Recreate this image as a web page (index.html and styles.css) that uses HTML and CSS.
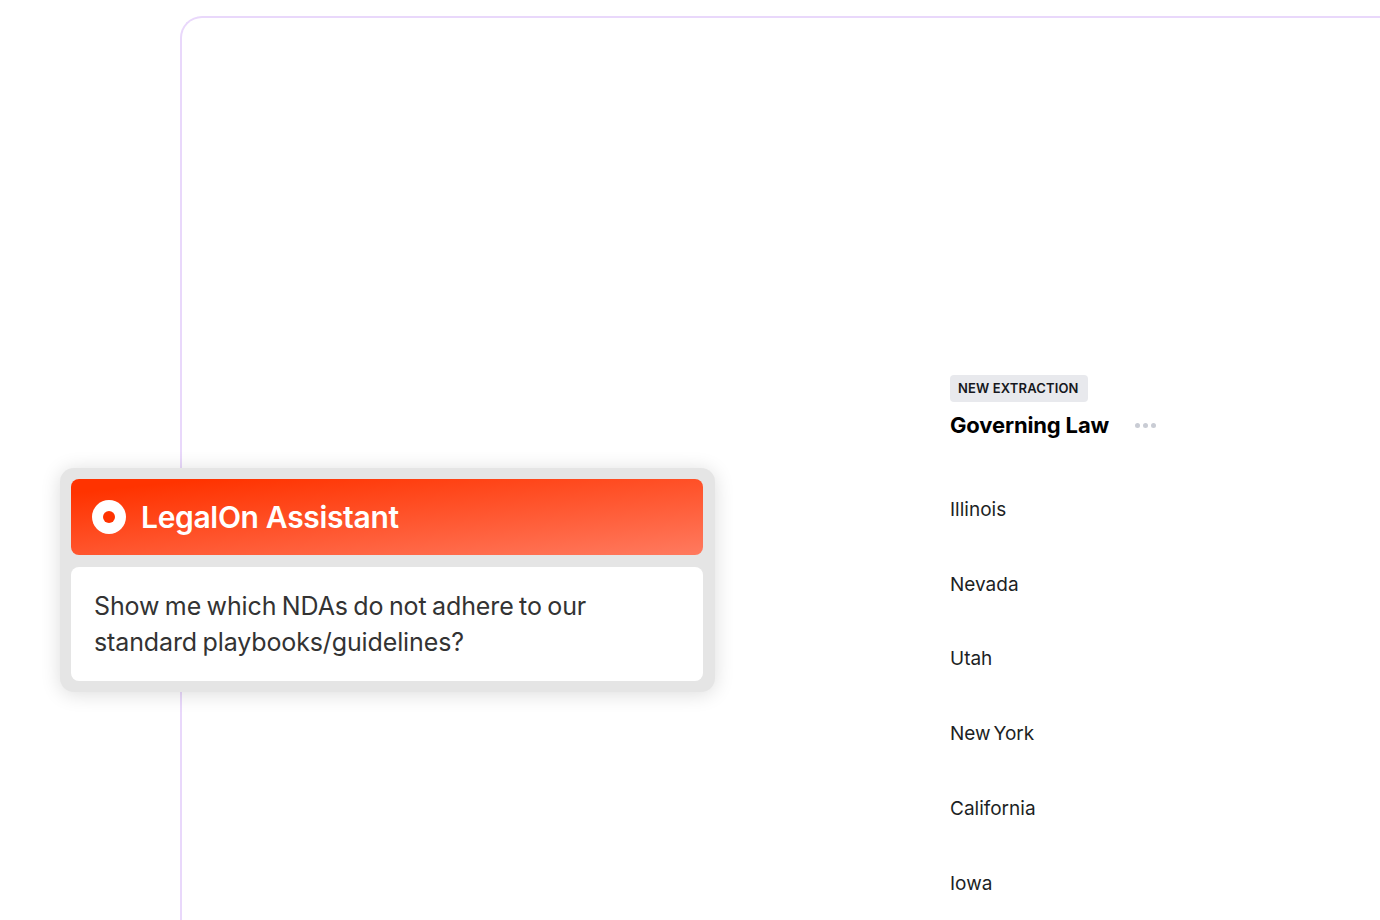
FILE: index.html
```html
<!DOCTYPE html>
<html lang="en">
<head>
    <meta charset="UTF-8">
    <meta name="viewport" content="width=device-width, initial-scale=1.0">
    <title>LegalOn Assistant</title>
    <link rel="stylesheet" href="styles.css">
</head>
<body>

<main class="frame">
    <section class="extraction">
        <span class="tag">NEW EXTRACTION</span>
        <div class="extraction-head">
            <h2>Governing Law</h2>
            <div class="dots"><i></i><i></i><i></i></div>
        </div>
        <ul class="values">
            <li>Illinois</li>
            <li>Nevada</li>
            <li>Utah</li>
            <li>New York</li>
            <li>California</li>
            <li>Iowa</li>
        </ul>
    </section>
</main>

<aside class="assistant">
    <div class="assistant-head">
        <svg class="assistant-logo" width="34" height="34" viewBox="0 0 34 34">
            <circle cx="17" cy="17" r="17" fill="#fff"/>
            <circle cx="17" cy="17" r="6" fill="#ff3300"/>
        </svg>
        <h1>LegalOn Assistant</h1>
    </div>
    <p class="assistant-body">Show me which NDAs do not adhere to our<br>standard playbooks/guidelines?</p>
</aside>

</body>
</html>
```

FILE: styles.css
```css
html, body {
    height: 100%;
}

body {
    margin: 0;
    background-color: white;
    font-family: Inter, "Liberation Sans", sans-serif;
    overflow: hidden;
    box-sizing: border-box;
    padding: 16px 0 0 180px;
}

.frame {
    height: 100%;
    box-sizing: border-box;
    border: 2px solid #e9d8fb; /* pale lilac */
    border-width: 2px 0 0 2px;
    border-top-left-radius: 22px;
    padding: 357px 0 0 768px;
}

.extraction {
    width: 300px;
}

.tag {
    display: inline-block;
    background-color: #e8e9ed;
    color: #16181d;
    font-size: 13px;
    font-weight: 600;
    letter-spacing: 0.14px;
    line-height: 27px;
    padding: 0 9px 0 8px;
    border-radius: 4px;
}

.extraction-head {
    display: flex;
    align-items: center;
    gap: 26px;
    margin-top: 8px;
}

h2 {
    margin: 0;
    color: #000;
    font-size: 22px;
    font-weight: 700;
    letter-spacing: -0.15px;
    line-height: 30px;
}

.dots {
    display: flex;
    gap: 3px;
}

.dots i {
    width: 5px;
    height: 5px;
    border-radius: 50%;
    background-color: #c9ccd4;
}

.values {
    list-style: none;
    margin: 33px 0 0;
    padding: 0;
    color: #1d1f24;
    font-size: 19px;
    word-spacing: -2.5px;
    line-height: 74.7px;
}

.assistant {
    position: absolute;
    left: 60px;
    top: 468px;
    width: 655px;
    height: 224px;
    box-sizing: border-box;
    padding: 11px 12px 11px 11px;
    display: flex;
    flex-direction: column;
    gap: 12px;
    background-color: #e5e5e5;
    border-radius: 14px;
    box-shadow: 0 2px 20px rgba(0, 0, 0, 0.14);
}

.assistant-head {
    height: 76px;
    display: flex;
    align-items: center;
    gap: 15px;
    padding-left: 21px;
    border-radius: 8px;
    background: linear-gradient(174deg, #ff3300 10%, #ff7a5f 100%);
}

.assistant-logo {
    flex: none;
}

h1 {
    margin: 0;
    color: white;
    font-size: 30px;
    font-weight: 600;
    letter-spacing: -0.33px;
}

.assistant-body {
    flex: 1;
    margin: 0;
    padding: 21px 23px;
    background-color: white;
    border-radius: 8px;
    color: #333;
    font-size: 25px;
    line-height: 36px;
    letter-spacing: -0.12px;
    word-spacing: -1.4px;
}
```
